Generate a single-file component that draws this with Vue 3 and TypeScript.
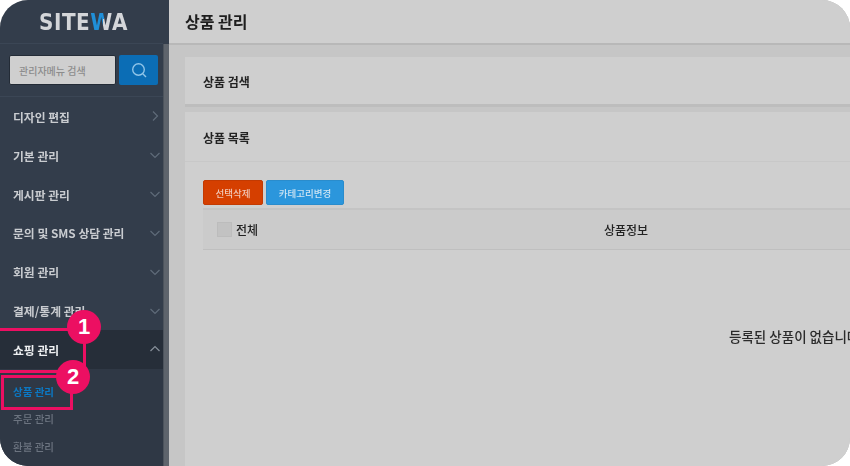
<template>
  <div class="shot">
    <aside class="side">
      <div class="logo"><span class="soft brand">SITE<span class="w">W</span>A</span></div>
      <div class="search">
        <input class="search-input" placeholder="관리자메뉴 검색" />
        <button class="search-btn">
          <svg width="18" height="18" viewBox="0 0 18 18" fill="none" stroke="#8fc4e8" stroke-width="1.4">
            <circle cx="8.5" cy="8.5" r="5.8" />
            <path d="M12.8 12.8 L16 16" />
          </svg>
        </button>
      </div>
      <ul class="menu">
        <li v-for="m in menus" :key="m.name" class="item" :class="{ open: m.open }">
          <span class="soft">{{ m.name }}</span>
          <svg width="12" height="12" viewBox="0 0 12 12" fill="none" stroke-width="1.2" :stroke="m.open ? '#87909a' : '#5f6b79'">
            <path :d="chevrons[m.dir]" />
          </svg>
        </li>
      </ul>
      <ul class="sub">
        <li v-for="(s, i) in subs" :key="s" :class="{ active: i === 0 }"><span class="soft">{{ s }}</span></li>
      </ul>
      <div class="scroll"></div>
    </aside>

    <main class="main">
      <header class="top"><span class="soft">상품 관리</span></header>
      <div class="body">
        <section class="card find"><span class="soft">상품 검색</span></section>
        <section class="card list">
          <div class="list-head"><span class="soft">상품 목록</span></div>
          <div class="list-body">
            <div class="btns">
              <button class="btn red"><span class="soft">선택삭제</span></button>
              <button class="btn blue"><span class="soft">카테고리변경</span></button>
            </div>
            <div class="thead">
              <div class="col-all"><i class="check"></i><span class="soft">전체</span></div>
              <div class="col-info"><span class="soft">상품정보</span></div>
            </div>
            <div class="empty"><span class="soft">등록된 상품이 없습니다.</span></div>
          </div>
        </section>
      </div>
    </main>

    <div class="mark mark1"></div>
    <div class="mark mark2"></div>
    <div class="num num1">1</div>
    <div class="num num2">2</div>
  </div>
</template>

<script setup lang="ts">
const chevrons: Record<string, string> = {
  right: "M4 1.5 L8.5 6 L4 10.5",
  down: "M1.5 4 L6 8.5 L10.5 4",
  up: "M1.5 8 L6 3.5 L10.5 8",
};

const menus = [
  { name: "디자인 편집", dir: "right" },
  { name: "기본 관리", dir: "down" },
  { name: "게시판 관리", dir: "down" },
  { name: "문의 및 SMS 상담 관리", dir: "down" },
  { name: "회원 관리", dir: "down" },
  { name: "결제/통계 관리", dir: "down" },
  { name: "쇼핑 관리", dir: "up", open: true },
];

const subs = ["상품 관리", "주문 관리", "환불 관리"];
</script>

<style>
html, body { margin: 0; background: #fff; overflow: hidden; }
</style>

<style scoped>
.shot {
  position: relative;
  width: 850px;
  height: 466px;
  display: flex;
  overflow: hidden;
  border-radius: 28px;
  font-family: "Noto Sans CJK KR", "Liberation Sans", sans-serif;
  background: #cfcfcf;
}
.soft { display: inline-block; filter: blur(0.45px); }
.side {
  position: relative;
  width: 169px;
  flex: none;
  background: #333d4b;
  box-sizing: border-box;
  padding-right: 6px;
}
.logo {
  height: 43px;
  text-align: center;
  padding-left: 4px;
  font: 700 20px/44px "DejaVu Sans", sans-serif;
  color: #d4d6d9;
  border-bottom: 1px solid #3b4655;
}
.brand { letter-spacing: 0.5px; transform: scaleY(1.12); }
.w {
  background: linear-gradient(100deg, #1f8fd8 58%, #d4d6d9 58%);
  -webkit-background-clip: text;
  background-clip: text;
  color: transparent;
}
.search {
  display: flex;
  gap: 3px;
  padding: 11px 5px 11px 9px;
  border-bottom: 1px solid #3b4655;
}
.search-input {
  width: 107px;
  height: 30px;
  box-sizing: border-box;
  padding: 0 9px;
  border: 1px solid #232b36;
  border-radius: 2px;
  background: #cfcfcf;
  font: 500 10px "Noto Sans CJK KR", sans-serif;
}
.search-input::placeholder { color: #8c8c8c; opacity: 1; }
.search-btn {
  width: 39px;
  height: 30px;
  padding: 0;
  border: 0;
  border-radius: 2px;
  background: #0b6db5;
  display: flex;
  align-items: center;
  justify-content: center;
}
.menu, .sub { list-style: none; margin: 0; padding: 0; }
.item {
  height: 38.85px;
  display: flex;
  align-items: center;
  justify-content: space-between;
  box-sizing: border-box;
  padding: 0 2px 0 13px;
  font-size: 11.8px;
  font-weight: 700;
  color: #c9ccd0;
}
.item.open { background: #262e39; color: #eef0f2; }
.sub { padding-top: 9px; background: #2f3845; height: 100px; }
.sub li {
  height: 27.5px;
  line-height: 27.5px;
  padding-left: 13px;
  font-size: 10.5px;
  font-weight: 500;
  color: #6c7480;
}
.sub li.active { color: #0b78c4; font-weight: 700; }
.scroll {
  position: absolute;
  top: 44px;
  right: 0;
  bottom: 0;
  width: 6px;
  background: #5e646c;
  border-left: 1px solid #4c535c;
  box-sizing: border-box;
}
.main {
  flex: 1;
  min-width: 0;
  display: flex;
  flex-direction: column;
  background: #c6c6c6;
}
.top {
  height: 43px;
  flex: none;
  background: #cfcfcf;
  border-bottom: 2px solid #b8b8b8;
  padding-left: 16px;
  font-size: 16px;
  font-weight: 700;
  line-height: 43px;
  color: #1e1e1e;
}
.body {
  flex: 1;
  display: flex;
  flex-direction: column;
  gap: 5px;
  padding: 12px 0 0 16px;
}
.card {
  background: #cfcfcf;
  font-size: 12px;
  font-weight: 700;
  color: #222;
}
.find {
  height: 50px;
  line-height: 50px;
  padding-left: 18px;
  border-bottom: 3px solid #bdbdbd;
  box-sizing: border-box;
}
.list { flex: 1; display: flex; flex-direction: column; }
.list-head {
  height: 49px;
  line-height: 52px;
  padding-left: 18px;
  border-bottom: 1px solid #c8c8c8;
}
.list-body { padding: 18px 0 0 18px; }
.btns { display: flex; gap: 3px; }
.btn {
  height: 25px;
  padding: 0;
  border-radius: 2px;
  font: 500 9.5px "Noto Sans CJK KR", sans-serif;
}
.red { width: 60px; background: #d53f00; border: 1px solid #c23a02; color: #f0c8b8; }
.blue { width: 78px; background: #2b96dc; border: 1px solid #2a8ccc; color: #cde4f3; }
.thead {
  margin-top: 3px;
  height: 42px;
  display: flex;
  align-items: center;
  background: #cbcbcb;
  border-top: 2px solid #c4c4c4;
  border-bottom: 1px solid #bfbfbf;
  box-sizing: border-box;
  font-size: 12px;
  font-weight: 500;
  color: #222;
}
.col-all { display: flex; align-items: center; gap: 4px; padding-left: 14px; width: 387px; flex: none; }
.check { width: 13px; height: 13px; background: #c2c2c2; border: 1px solid #bcbcbc; }
.empty {
  margin-top: 76px;
  padding-left: 526px;
  white-space: nowrap;
  font-size: 13.5px;
  font-weight: 500;
  color: #2b2b2b;
  line-height: 20px;
}
.mark { position: absolute; box-sizing: border-box; border: 3px solid #ec0f62; }
.mark1 { left: -4px; top: 328px; width: 90px; height: 45px; }
.mark2 { left: 1px; top: 375px; width: 72px; height: 35px; }
.num {
  position: absolute;
  width: 34px;
  height: 34px;
  border-radius: 50%;
  background: #ec0f62;
  color: #fff;
  font: 700 22px/34px "Liberation Sans", sans-serif;
  text-align: center;
}
.num1 { left: 67px; top: 310px; }
.num2 { left: 56px; top: 360px; }
</style>
